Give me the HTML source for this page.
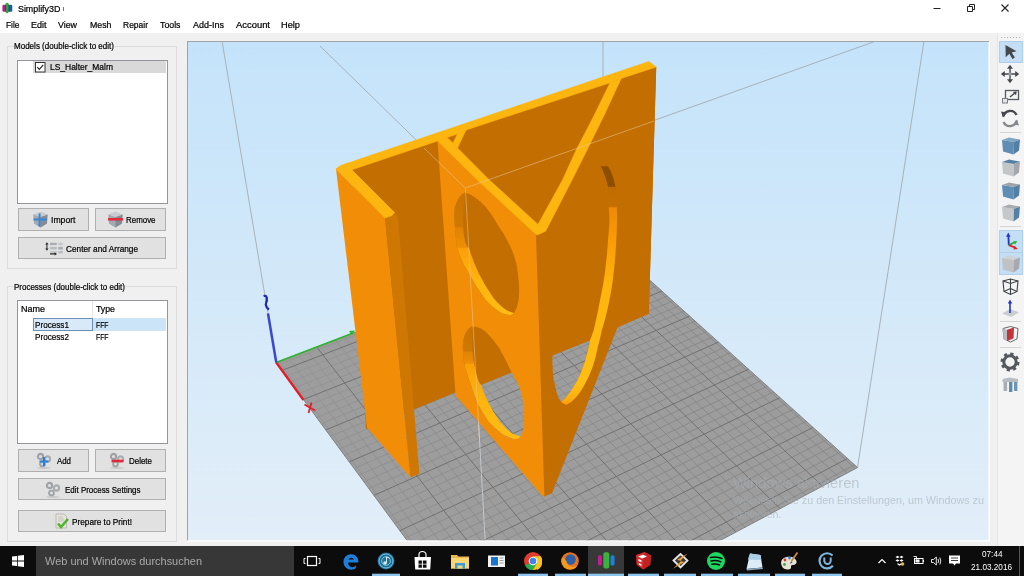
<!DOCTYPE html>
<html><head><meta charset="utf-8"><title>Simplify3D</title>
<style>
html,body{margin:0;padding:0}
body{width:1024px;height:576px;overflow:hidden;position:relative;background:#F0F0F0;font-family:"Liberation Sans", sans-serif;}
</style></head><body>
<div style="position:absolute;left:0;top:0;width:1024px;height:32.500px;background:#fff"></div>
<svg style="position:absolute;left:2px;top:2px" width="12" height="12" viewBox="2 2 12 12"><rect x="2.400" y="4.700" width="3.600" height="7" rx="1.300" fill="#B5238F"/><rect x="8.300" y="4.700" width="4" height="7" rx="1.300" fill="#1C5CB0"/><path d="M5.300 4l1.800 -1.500l1.800 1.500v8l-1.800 1.500l-1.800 -1.500z" fill="#2FA33A"/><rect x="4.900" y="5" width="0.800" height="6.400" fill="#5A1A55"/><rect x="8.600" y="5" width="0.800" height="6.400" fill="#14406E"/></svg>
<div style="position:absolute;left:62.800px;top:7.400px;width:1px;height:3.600px;background:#777"></div>
<svg style="position:absolute;left:920px;top:0.5px" width="104" height="17" viewBox="0 0 104 17"><path d="M13.5 7.5h7" stroke="#222" stroke-width="1"/><path d="M47.5 5.5h5v5h-5zM49.5 5.5v-2h5v5h-2" stroke="#222" stroke-width="1" fill="none"/><path d="M81.5 3.5l7 7m0 -7l-7 7" stroke="#222" stroke-width="1.1"/></svg>
<div style="position:absolute;left:7px;top:46px;width:168px;height:221px;border:1px solid #DCDCDC"></div>
<div style="position:absolute;left:7px;top:286px;width:168px;height:254px;border:1px solid #DCDCDC"></div>
<div style="position:absolute;left:17px;top:60px;width:149px;height:142px;background:#fff;border:1px solid #92969B"></div>
<div style="position:absolute;left:33px;top:61px;width:133px;height:12px;background:#D9D9D9"></div>
<svg style="position:absolute;left:35px;top:62px" width="11" height="11" viewBox="0 0 11 11"><rect x="0.5" y="0.5" width="9.5" height="9.5" fill="#fff" stroke="#333" stroke-width="1"/><path d="M2.3 5.2l2 2.2l4 -4.6" stroke="#222" stroke-width="1.1" fill="none"/></svg>
<div style="position:absolute;left:18px;top:208px;width:69px;height:21px;background:#E1E1E1;border:1px solid #B0B0B0"></div>
<div style="position:absolute;left:95px;top:208px;width:69px;height:21px;background:#E1E1E1;border:1px solid #B0B0B0"></div>
<div style="position:absolute;left:18px;top:237px;width:146px;height:20px;background:#E1E1E1;border:1px solid #B0B0B0"></div>
<div style="position:absolute;left:18px;top:449px;width:69px;height:21px;background:#E1E1E1;border:1px solid #B0B0B0"></div>
<div style="position:absolute;left:95px;top:449px;width:69px;height:21px;background:#E1E1E1;border:1px solid #B0B0B0"></div>
<div style="position:absolute;left:18px;top:478px;width:146px;height:20px;background:#E1E1E1;border:1px solid #B0B0B0"></div>
<div style="position:absolute;left:18px;top:510px;width:146px;height:20px;background:#E1E1E1;border:1px solid #B0B0B0"></div>
<div style="position:absolute;left:17px;top:300px;width:149px;height:142px;background:#fff;border:1px solid #92969B"></div>
<div style="position:absolute;left:92px;top:301px;width:1px;height:17px;background:#E5E5E5"></div>
<div style="position:absolute;left:33px;top:318px;width:133px;height:13px;background:#CCE4F7"></div>
<div style="position:absolute;left:33px;top:318px;width:58px;height:11px;background:#D8EAF9;border:1px solid #6F8FB5"></div>
<svg style="position:absolute;left:31.5px;top:211px" width="17" height="18" viewBox="0 0 17 18"><path d="M1.5 3.500l7 -2.500l7 2.500l-0.500 9l-6.500 4l-6.500 -4z" fill="#B4B8BD"/><path d="M1.500 3.500l7 2.500v10.500l-6.500 -4z" fill="#A4A9AF"/><path d="M8.500 6l7 -2.500l-0.500 9l-6.500 4z" fill="#858B92"/><path d="M1.500 3.500l7 -2.500l7 2.500l-7 2.500z" fill="#C9CCD0"/><path d="M7.600 2.500v13M1.500 8.500h13.500" stroke="#3787D2" stroke-width="2"/></svg>
<svg style="position:absolute;left:106.500px;top:211px" width="17" height="18" viewBox="0 0 17 18"><path d="M1.5 3.500l7 -2.500l7 2.500l-0.500 9l-6.500 4l-6.500 -4z" fill="#B4B8BD"/><path d="M1.500 3.500l7 2.500v10.500l-6.500 -4z" fill="#A4A9AF"/><path d="M8.500 6l7 -2.500l-0.500 9l-6.500 4z" fill="#858B92"/><path d="M1.500 3.500l7 -2.500l7 2.500l-7 2.500z" fill="#C9CCD0"/><path d="M1 8.300h15" stroke="#E0303E" stroke-width="2.600"/></svg>
<svg style="position:absolute;left:45px;top:241px" width="20" height="15" viewBox="45 241 20 15"><path d="M46.900 243.500v6" stroke="#333" stroke-width="1.100" fill="none"/><path d="M46.900 242.200l1.700 2.400h-3.400zM46.900 250.800l1.700 -2.400h-3.400z" fill="#333"/><rect x="50" y="242.800" width="6.800" height="2.300" fill="#A9ADB2"/><rect x="58.300" y="242.800" width="4.500" height="2.300" fill="#C2C5C9"/><rect x="50" y="246.900" width="6.800" height="2.600" fill="#B9BDC1"/><rect x="58.300" y="246.900" width="4.500" height="2.600" fill="#A9ADB2"/><rect x="50" y="251" width="6.800" height="1.800" fill="#C2C5C9"/><rect x="58.300" y="251" width="4.500" height="2.400" fill="#B9BDC1"/><path d="M50 253.900h5" stroke="#222" stroke-width="1.200"/><path d="M57 253.900l-2.400 -1.600v3.200z" fill="#222"/></svg>
<svg style="position:absolute;left:36px;top:452px" width="17" height="17" viewBox="0 0 17 17"><ellipse cx="8" cy="16" rx="7" ry="0.800" fill="#C2C2C2"/><circle cx="4.5" cy="4.5" r="2.600" fill="none" stroke="#9EA1A5" stroke-width="2.100"/><circle cx="11.5" cy="7" r="2.600" fill="none" stroke="#A8ABAF" stroke-width="2.100"/><circle cx="6.5" cy="12" r="2.400" fill="none" stroke="#A0A3A7" stroke-width="1.900"/><path d="M8 5v9M3.5 9.5h9" stroke="#2D7FD2" stroke-width="2.2"/></svg>
<svg style="position:absolute;left:109px;top:452px" width="17" height="17" viewBox="0 0 17 17"><ellipse cx="8" cy="16" rx="7" ry="0.800" fill="#C2C2C2"/><circle cx="4.5" cy="4.5" r="2.600" fill="none" stroke="#9EA1A5" stroke-width="2.100"/><circle cx="11.5" cy="7" r="2.600" fill="none" stroke="#A8ABAF" stroke-width="2.100"/><circle cx="6.5" cy="12" r="2.400" fill="none" stroke="#A0A3A7" stroke-width="1.900"/><path d="M2.5 9h12" stroke="#E02A3A" stroke-width="2.6"/></svg>
<svg style="position:absolute;left:45px;top:481px" width="17" height="17" viewBox="0 0 17 17"><ellipse cx="8" cy="16" rx="7" ry="0.800" fill="#C2C2C2"/><circle cx="4.5" cy="4.5" r="2.600" fill="none" stroke="#9EA1A5" stroke-width="2.100"/><circle cx="11.5" cy="7" r="2.600" fill="none" stroke="#A8ABAF" stroke-width="2.100"/><circle cx="6.5" cy="12" r="2.400" fill="none" stroke="#A0A3A7" stroke-width="1.900"/></svg>
<svg style="position:absolute;left:54px;top:513px" width="16" height="17" viewBox="0 0 16 17"><path d="M2 1h8l2.5 2.5v11.5h-10.5z" fill="#E4E4DC" stroke="#B0B0A8" stroke-width="0.8"/><path d="M4 4h5M4 6h6M4 8h6" stroke="#B8B8B0" stroke-width="0.7"/><path d="M4 10.5l3 3.5l7 -8" stroke="#4FB52B" stroke-width="2.6" fill="none"/></svg>
<svg width="1024" height="576" viewBox="0 0 1024 576" style="position:absolute;left:0;top:0">
<defs>
<linearGradient id="sky" x1="0" y1="0" x2="0" y2="1"><stop offset="0" stop-color="#C4E3FA"/><stop offset="1" stop-color="#E2EEF8"/></linearGradient>
<clipPath id="vp"><rect x="188" y="42" width="800.5" height="498.2"/></clipPath>
<linearGradient id="rimD" gradientUnits="userSpaceOnUse" x1="0" y1="166" x2="0" y2="405"><stop offset="0" stop-color="#8E4E00"/><stop offset="0.085" stop-color="#8E4E00"/><stop offset="0.09" stop-color="#BE6C00"/><stop offset="0.17" stop-color="#C57000"/><stop offset="0.175" stop-color="#F08A05"/><stop offset="0.30" stop-color="#F99A06"/><stop offset="0.5" stop-color="#FFB40C"/><stop offset="0.9" stop-color="#FFBE14"/><stop offset="0.97" stop-color="#FFB010"/><stop offset="1" stop-color="#FF9A08"/></linearGradient>
<linearGradient id="rimU" gradientUnits="userSpaceOnUse" x1="0" y1="192" x2="0" y2="315"><stop offset="0" stop-color="#C97300"/><stop offset="0.28" stop-color="#CE7902"/><stop offset="0.29" stop-color="#E08304"/><stop offset="0.45" stop-color="#EE8E06"/><stop offset="0.46" stop-color="#FBA008"/><stop offset="0.75" stop-color="#FFB60E"/><stop offset="1" stop-color="#FFBC12"/></linearGradient>
<linearGradient id="rimL" gradientUnits="userSpaceOnUse" x1="0" y1="326" x2="0" y2="439"><stop offset="0" stop-color="#C97300"/><stop offset="0.22" stop-color="#CE7902"/><stop offset="0.23" stop-color="#E08304"/><stop offset="0.33" stop-color="#EE8E06"/><stop offset="0.34" stop-color="#FBA008"/><stop offset="0.7" stop-color="#FFB60E"/><stop offset="1" stop-color="#FFBC12"/></linearGradient>
<linearGradient id="mg" gradientUnits="userSpaceOnUse" x1="276" y1="363" x2="640" y2="520"><stop offset="0" stop-color="#939393"/><stop offset="0.5" stop-color="#888888"/><stop offset="1" stop-color="#828282"/></linearGradient>
</defs>
<rect x="187" y="41" width="803" height="500.5" fill="#FFFFFF"/>
<rect x="187" y="41" width="802" height="1" fill="#A3A3A3"/><rect x="187" y="41" width="1" height="499.5" fill="#A3A3A3"/>
<rect x="188" y="42" width="800.5" height="498.2" fill="url(#sky)"/>
<g clip-path="url(#vp)">
<polygon points="276.2,362.5 603.0,238.0 857.5,467.5 495.0,660.0" fill="#9D9D9D"/>
<path d="M277.9 364.8L605.0 239.8M286.3 376.1L615.0 248.8M278.9 361.5L498.0 658.4M290.5 381.9L620.0 253.4M288.5 357.8L508.9 652.6M294.8 387.7L625.1 257.9M298.0 354.2L519.7 646.9M299.1 393.6L630.2 262.6M307.4 350.6L530.4 641.2M307.8 405.5L640.6 271.9M326.1 343.5L551.6 630.0M312.3 411.5L645.9 276.7M335.3 340.0L562.0 624.4M316.7 417.6L651.2 281.5M344.5 336.5L572.4 618.9M321.3 423.7L656.5 286.3M353.6 333.0L582.6 613.5M330.4 436.2L667.4 296.0M371.6 326.2L602.9 602.7M335.1 442.5L672.9 301.0M380.6 322.8L612.9 597.4M339.8 448.9L678.4 306.0M389.4 319.4L622.9 592.1M344.5 455.3L684.0 311.0M398.2 316.0L632.7 586.9M354.1 468.4L695.2 321.2M415.7 309.4L652.2 576.5M359.0 475.1L701.0 326.3M424.3 306.1L661.8 571.4M363.9 481.8L706.7 331.5M432.9 302.8L671.3 566.4M368.9 488.5L712.6 336.8M441.4 299.6L680.8 561.3M379.0 502.3L724.3 347.4M458.3 293.1L699.5 551.4M384.1 509.2L730.3 352.8M466.7 289.9L708.7 546.5M389.3 516.3L736.3 358.2M475.0 286.8L717.9 541.6M394.6 523.4L742.4 363.7M483.2 283.6L727.0 536.8M405.2 537.9L754.7 374.8M499.6 277.4L745.0 527.3M410.6 545.2L761.0 380.5M507.7 274.3L753.8 522.5M416.0 552.6L767.3 386.1M515.7 271.3L762.7 517.9M421.5 560.1L773.6 391.9M523.7 268.2L771.4 513.2M432.7 575.3L786.5 403.5M539.6 262.2L788.7 504.0M438.4 583.1L793.0 409.4M547.4 259.2L797.2 499.5M444.2 590.9L799.6 415.3M555.2 256.2L805.7 495.0M450.0 598.8L806.3 421.3M562.9 253.3L814.1 490.5M461.8 614.8L819.8 433.5M578.3 247.4L830.8 481.7M467.8 623.0L826.6 439.6M585.9 244.5L839.0 477.3M473.8 631.2L833.5 445.9M593.4 241.6L847.2 473.0M480.0 639.6L840.5 452.1M600.9 238.8L855.3 468.7M492.4 656.5L854.6 464.9" stroke="url(#mg)" stroke-width="0.75" fill="none"/>
<path d="M282.1 370.4L610.0 244.3M303.4 399.5L635.4 267.2M316.8 347.1L541.0 635.5M325.8 429.9L661.9 291.1M362.6 329.6L592.8 608.1M349.3 461.8L689.6 316.1M407.0 312.7L642.5 581.7M373.9 495.4L718.4 342.1M449.9 296.3L690.2 556.4M399.8 530.6L748.5 369.2M491.4 280.5L736.0 532.0M427.1 567.7L780.0 397.6M531.7 265.2L780.1 508.6M455.8 606.8L813.0 427.4M570.6 250.3L822.5 486.1M486.2 648.0L847.5 458.5" stroke="#717171" stroke-width="1" fill="none"/>
<polygon points="276.2,362.5 603.0,238.0 857.5,467.5 495.0,660.0" fill="none" stroke="#808080" stroke-width="1"/>
<g stroke="#A4ABB2" stroke-width="0.9" fill="none">
<path d="M222 41L276.25 362.5"/>
<path d="M603 41L603 238"/>
<path d="M924 41L857.5 467.5"/>
<path d="M320 46L465.4 188L876 41"/>
<path d="M465.4 188L485.2 541" stroke="#CDD1D5" stroke-width="0.8"/>
</g>
<path d="M276.25 362.5L352 333.5" stroke="#2DB52D" stroke-width="1.6"/>
<path d="M349 331l6 -0.5l-3 4.5z" fill="#2DB52D"/>
<path d="M276.25 362.5L303.5 400" stroke="#E0202A" stroke-width="2.4"/>
<path d="M304.5 404.5L315 410.5M311.5 402.5L308.5 413" stroke="#E0202A" stroke-width="1.8"/>
<path d="M276.25 362.5L268 313.5" stroke="#3A48D0" stroke-width="2.5"/>
<path d="M263.6 296q2.600 -0.800 3.200 1.800q0.400 2.600 -0.600 4.600q-1 2.400 0.400 4.600q0.800 1.600 2.400 2.400" stroke="#1F28B8" stroke-width="2.200" fill="none"/>
<polygon points="351.8,166.5 650.0,64.8 656.2,67.3 648.8,313.8 366.0,429.0" fill="#C36E00"/>
<path fill-rule="evenodd" d="M534.5 233L545.6 231.25L621.25 78.4L656.25 67L648.75 313.75L617.5 327.5L552 493.25L544.4 496.4L542 495Z M552.5 355.6L590 340.6L585 361.25Q582 371 577.5 380T568.75 393.75Q565 399 561.25 402Q558 398 557 393.75T553.75 380Q552 368 552.5 355.6Z" fill="#C36E00"/>
<path d="M600.6 166.25L608 166.25Q613.5 175 615.6 187.5Q617.5 205 617 222Q616.8 232 616.25 240.75Q615.5 257 613.75 272Q612.5 284 610.6 294Q607 314 601.9 330Q600 339 598 346.25Q596 357 592.5 367.5Q589 377 583.75 386.25Q579 395 571.25 402L566 405L561.25 402Q565 399 568.75 393.75Q574 387 577.5 380Q582 371 585 361.25Q588 351 590 340.6Q592 335 593.75 330Q598 312 601.25 294Q603.5 284 605 272Q607 256 608 240.75Q609 230 609.4 222Q609.5 214 608.75 207.5Q608.5 196 608 186.25Q605 174 600.6 166.25Z" fill="url(#rimD)"/>
<polygon points="336.0,168.8 340.5,165.6 648.8,61.5 656.2,67.0 621.2,78.4 610.0,82.8 466.0,130.0 457.5,134.0 447.0,137.5 437.5,141.0 351.8,169.8" fill="#FDB50F" stroke="#FDB50F" stroke-width="0.6" stroke-linejoin="round"/>
<polygon points="336.0,168.8 385.0,218.0 410.5,477.5 367.0,427.5" fill="#F28D08"/>
<polygon points="385.0,218.0 394.5,212.5 398.0,218.0 419.4,473.8 410.5,477.5" fill="#CE7803"/>
<polygon points="336.0,168.8 351.8,169.8 394.5,212.5 392.0,215.5 385.0,218.0" fill="#FDB50F" stroke="#FDB50F" stroke-width="0.6" stroke-linejoin="round"/>
<path fill-rule="evenodd" d="M464.75 192.25Q458 196 454.75 207.25Q453.5 216 454.75 226Q455.5 237 457 248Q461 261 468.5 273Q476 287 486 300.5Q493 308 501 313Q506 315.5 511 315Q513.5 314 514.75 311.75Q517.5 307 518.5 300.5Q519.5 293 519 285.5Q518.5 276 517 266.75Q515 257 511 248Q506 236 498.5 226Q493 216 486 207.25Q476 196 464.75 192.25ZM466 192.5Q463.5 200 463 212Q462.5 226 464 236T469 248Q473 261 478.5 273Q485 286 493.5 298Q500 306 507 310.5L513.5 313L514.75 311.75Q517.5 307 518.5 300.5Q519.5 293 519 285.5Q518.5 276 517 266.75Q515 257 511 248Q506 236 498.5 226Q493 216 486 207.25Q476 196 466 192.5Z" fill="url(#rimU)"/>
<path fill-rule="evenodd" d="M471 326.6Q465 331 463 341Q462.5 350 463.5 359.75Q465 369 468.5 378.5Q470 383 472 388Q474 395 477.25 402.75Q482 412 488.5 421.5Q495 429 502.25 434Q508 437.5 513.5 439Q516.5 439.3 518.5 438.4Q520 437.5 521 436Q523 432 523.5 427.75Q524.3 421 524 415.25Q523.5 405 522.25 396.5Q520.5 390 518 384Q516 380 514.75 378.5Q512 372 508.5 366Q504 356 498.5 347Q493 339 486 332Q479 326 471 326.6ZM472 328.5Q471.5 340 473.5 360Q475 369 477 376T481 384.75Q484 394 488.5 402.75Q493 412 499.75 421.5Q505 428 511 432.75Q515 435 519.75 436L521 436Q523 432 523.5 427.75Q524.3 421 524 415.25Q523.5 405 522.25 396.5Q520.5 390 518 384Q516 380 514.75 378.5Q512 372 508.5 366Q504 356 498.5 347Q493 339 486 332Q479 326 472 328.5Z" fill="url(#rimL)"/>
<clipPath id="cl"><path d="M472 328.5Q471.5 340 473.5 360Q475 369 477 376T481 384.75Q484 394 488.5 402.75Q493 412 499.75 421.5Q505 428 511 432.75Q515 435 519.75 436L521 436Q523 432 523.5 427.75Q524.3 421 524 415.25Q523.5 405 522.25 396.5Q520.5 390 518 384Q516 380 514.75 378.5Q512 372 508.5 366Q504 356 498.5 347Q493 339 486 332Q479 326 472 328.5Z"/></clipPath>
<polygon clip-path="url(#cl)" points="460.0,320.0 530.0,320.0 530.0,365.3 460.0,393.3" fill="#C36E00"/>
<path fill-rule="evenodd" d="M437.5 141L536 234.4L544.4 496.4L541.25 494.5L455.6 395.6ZM464.75 192.25Q458 196 454.75 207.25Q453.5 216 454.75 226Q455.5 237 457 248Q461 261 468.5 273Q476 287 486 300.5Q493 308 501 313Q506 315.5 511 315Q513.5 314 514.75 311.75Q517.5 307 518.5 300.5Q519.5 293 519 285.5Q518.5 276 517 266.75Q515 257 511 248Q506 236 498.5 226Q493 216 486 207.25Q476 196 464.75 192.25ZM471 326.6Q465 331 463 341Q462.5 350 463.5 359.75Q465 369 468.5 378.5Q470 383 472 388Q474 395 477.25 402.75Q482 412 488.5 421.5Q495 429 502.25 434Q508 437.5 513.5 439Q516.5 439.3 518.5 438.4Q520 437.5 521 436Q523 432 523.5 427.75Q524.3 421 524 415.25Q523.5 405 522.25 396.5Q520.5 390 518 384Q516 380 514.75 378.5Q512 372 508.5 366Q504 356 498.5 347Q493 339 486 332Q479 326 471 326.6Z" fill="#F28D08"/>
<polygon points="437.5,141.0 447.0,137.5 453.0,143.0 457.5,148.0 489.4,180.0 538.0,224.4 562.5,180.0 576.2,150.0 593.8,116.0 610.0,82.8 621.2,78.4 603.8,116.0 587.0,150.0 572.0,180.0 545.6,231.2 537.0,235.0 536.0,234.4 480.0,182.5" fill="#FDB50F" stroke="#FDB50F" stroke-width="0.6" stroke-linejoin="round"/>
<polygon points="453.0,143.0 457.5,134.0 466.0,130.0 457.5,148.0" fill="#FDB50F" stroke="#FDB50F" stroke-width="0.6" stroke-linejoin="round"/>
<g stroke="#E8CB98" stroke-width="0.9" fill="none" opacity="0.6">
<path d="M424 148L465.4 188L654 121"/>
<path d="M465.4 188L479.5 440"/>
</g>
</g>
</svg>
<div style="position:absolute;left:997px;top:33px;width:27px;height:513px;background:#F4F4F4;border-left:1px solid #E6E6E6"></div>
<svg style="position:absolute;left:996px;top:33px" width="28" height="513" viewBox="996 33 28 513">
<path d="M1001 37.5h21" stroke="#B5B5B5" stroke-width="1" stroke-dasharray="1.2 1.8"/>
<rect x="999.5" y="41.5" width="23" height="21" fill="#C3DEF5" stroke="#AFCFEC" stroke-width="1"/>
<rect x="999.5" y="230.500" width="23" height="22" fill="#C3DEF5" stroke="#AFCFEC" stroke-width="1"/>
<rect x="999.5" y="252.5" width="23" height="22" fill="#C3DEF5" stroke="#AFCFEC" stroke-width="1"/>
<path d="M1000 132.5h21" stroke="#D5D5D5" stroke-width="1"/>
<path d="M1000 226.5h21" stroke="#D5D5D5" stroke-width="1"/>
<path d="M1000 321.5h21" stroke="#D5D5D5" stroke-width="1"/>
<path d="M1000 347.5h21" stroke="#D5D5D5" stroke-width="1"/>
<path d="M1005.5 45l11 6.2l-4.8 1.2l3.2 5.2l-2.4 1.4l-3.2 -5.3l-3.6 3.6z" fill="#45484D"/>
<g fill="#45484D" stroke="#45484D" stroke-width="1.4"><path d="M1010 68v12M1004 74h12" fill="none"/><path d="M1010 64.800l3 4h-6zM1010 83.200l3 -4h-6zM1000.800 74l4 -3v6zM1019.200 74l-4 -3v6z" stroke="none"/></g><rect x="1008.6" y="72.600" width="2.800" height="2.800" fill="#9A9DA2"/>
<rect x="1005.5" y="90.5" width="13" height="9" fill="#F4F4F4" stroke="#55585D" stroke-width="1.3"/><rect x="1002.5" y="98.500" width="5" height="4.500" fill="#E6E6E6" stroke="#7A7D82" stroke-width="1"/><path d="M1010 97l5.500 -4.500" stroke="#45484D" stroke-width="1.5"/><path d="M1016.800 91.300l-4 0.700l3.200 3.200z" fill="#45484D"/>
<g fill="none" stroke-width="2.300"><path d="M1003.300 116.500a7 7 0 0 1 13.200 -1.500" stroke="#45484D"/><path d="M1016.700 120.500a7 7 0 0 1 -13.200 1.500" stroke="#85888D"/></g><path d="M1001 111.500l6 1l-4 5z" fill="#45484D"/><path d="M1019 125.500l-6 -1l4 -5z" fill="#85888D"/>
<path d="M1002 140L1014 142L1013.5 154.5L1003 151.5z" fill="#5F8DB3"/><path d="M1002 140L1009 137.5L1020 139.5L1014 142z" fill="#7FA6C4"/><path d="M1014 142L1020 139.5L1019 150.5L1013.5 154.5z" fill="#527FA5"/>
<path d="M1002 162L1014 164L1013.5 176.5L1003 173.5z" fill="#C3C6C9"/><path d="M1002 162L1009 159.5L1020 161.5L1014 164z" fill="#5580A5"/><path d="M1014 164L1020 161.5L1019 172.5L1013.5 176.5z" fill="#A3A6AA"/>
<path d="M1002 185L1014 187L1013.5 199.5L1003 196.5z" fill="#5F8DB3"/><path d="M1002 185L1009 182.5L1020 184.5L1014 187z" fill="#A0A4A9"/><path d="M1014 187L1020 184.5L1019 195.5L1013.5 199.5z" fill="#527FA5"/>
<path d="M1002 207L1014 209L1013.5 221.5L1003 218.5z" fill="#C5C7CA"/><path d="M1002 207L1009 204.5L1020 206.5L1014 209z" fill="#A8ACB0"/><path d="M1014 209L1020 206.5L1019 217.5L1013.5 221.5z" fill="#5580A5"/>
<path d="M1008.800 245.100L1008.400 236" stroke="#2335C8" stroke-width="1.800"/><path d="M1008.300 232.500l2.200 4.200h-4.400z" fill="#2335C8"/><path d="M1008.800 245.100l6 -2.800" stroke="#27B03A" stroke-width="1.800"/><path d="M1017.300 241l-4 0.200l1.800 3.200z" fill="#27B03A"/><path d="M1008.800 245.100l6.500 2.600" stroke="#D8262E" stroke-width="1.800"/><path d="M1018 248.900l-3.400 -2.800l-1.200 3.400z" fill="#D8262E"/>
<path d="M1002 258L1014 260L1013.5 272.5L1003 269.5z" fill="#BFC1C4"/><path d="M1002 258L1009 255.5L1020 257.5L1014 260z" fill="#CFD1D4"/><path d="M1014 260L1020 257.5L1019 268.5L1013.5 272.5z" fill="#A6A9AD"/>
<g fill="none" stroke="#3C3F44" stroke-width="1.100"><path d="M1003 281l7.500 -2l7.500 2l-1 10.500l-6.500 3l-6.500 -3z"/><path d="M1003 281l7.500 2.500l7.500 -2.500M1010.500 283.500v11M1010.500 279v9.500l-6.500 3M1010.500 288.500l6.500 3"/></g>
<path d="M1002 313.500l8 -4.500l9 3.500l-8 4.500z" fill="#C9CCD0"/><path d="M1010 313v-11" stroke="#2335C8" stroke-width="1.600"/><path d="M1010 299.500l2.200 4h-4.400z" fill="#2335C8"/>
<g fill="none" stroke="#55585D" stroke-width="0.9"><path d="M1003 328.500l7.500 -2l7.500 2l-1 10.500l-6.500 3l-6.500 -3z"/></g><path d="M1003 328.500l4 1.300v11.200l-3.600 -1.800z" fill="#B8BBBF"/><path d="M1007 329.800l7 -2.300l-0.500 11l-6.500 2.500z" fill="#C3343A"/>
<circle cx="1010" cy="362" r="6.200" fill="none" stroke="#55585D" stroke-width="3"/><circle cx="1010" cy="362" r="8.300" fill="none" stroke="#55585D" stroke-width="2.400" stroke-dasharray="3.260 3.260"/>
<path d="M1002.500 379l7 -1.500l8.500 1.500v3h-15.500z" fill="#B9BDC2"/><rect x="1003.500" y="382" width="3.600" height="9" fill="#A9ADB2"/><rect x="1009" y="382" width="3.400" height="10" fill="#5C8DB0"/><rect x="1014" y="382" width="3.400" height="9" fill="#6E95B3"/>
</svg>
<div style="position:absolute;left:0;top:545.5px;width:1024px;height:30.5px;background:#0C0C0C"></div>
<div style="position:absolute;left:36px;top:545.5px;width:258px;height:30.5px;background:#373737"></div>
<div style="position:absolute;left:588px;top:545.5px;width:36px;height:30.5px;background:#383838"></div>
<svg style="position:absolute;left:0;top:546px" width="1024" height="30" viewBox="0 546 1024 30">
<path d="M12 556.600l5 -0.700v4.700h-5zM17.800 555.800l6.200 -0.900v5.700h-6.200zM12 561.400h5v4.700l-5 -0.700zM17.800 561.400h6.200v5.700l-6.200 -0.900z" fill="#fff"/>
<rect x="372" y="573.700" width="28" height="2.300" fill="#8CC6EE"/>
<rect x="518" y="573.700" width="30" height="2.300" fill="#8CC6EE"/>
<rect x="555" y="573.700" width="31" height="2.300" fill="#8CC6EE"/>
<rect x="588" y="573.700" width="36" height="2.300" fill="#8CC6EE"/>
<rect x="628" y="573.700" width="31" height="2.300" fill="#8CC6EE"/>
<rect x="664" y="573.700" width="32" height="2.300" fill="#8CC6EE"/>
<rect x="701" y="573.700" width="32" height="2.300" fill="#8CC6EE"/>
<rect x="738" y="573.700" width="32" height="2.300" fill="#8CC6EE"/>
<rect x="775" y="573.700" width="30" height="2.300" fill="#8CC6EE"/>
<rect x="812" y="573.700" width="30" height="2.300" fill="#8CC6EE"/>
<rect x="307.500" y="556.500" width="9" height="9" fill="none" stroke="#fff" stroke-width="1.200"/><path d="M305.500 558.500h-1.500v5h1.500M318.500 558.500h1.500v5h-1.500" stroke="#fff" stroke-width="1" fill="none"/>
<path d="M343.500 561.500a7.500 7.500 0 0 1 14.800 -1.500v2.500h-10a4 4 0 0 0 7.500 2.500v3.200a7.800 7.800 0 0 1 -12.300 -5.500z M348.500 559.500h5.500a3 3 0 0 0 -5.500 0z" fill="#1E7FDB" fill-rule="evenodd"/>
<circle cx="386" cy="561" r="8.500" fill="#1F6E94"/><circle cx="386" cy="561" r="7" fill="none" stroke="#7CC4E4" stroke-width="1"/><circle cx="386" cy="561" r="4.300" fill="none" stroke="#7CC4E4" stroke-width="1"/><circle cx="385" cy="563" r="1.800" fill="#CFEAF6"/><path d="M386.500 563v-6l3 1" stroke="#CFEAF6" stroke-width="1" fill="none"/>
<path d="M414.500 557h16.500l-0.800 12.500h-15z" fill="#fff"/><path d="M419 557v-2.500a3.500 3 0 0 1 7 0v2.500" stroke="#fff" stroke-width="1.200" fill="none"/><path d="M418.500 560.500h3.400v3.200h-3.400zM422.900 560.500h3.600v3.200h-3.600zM418.500 564.500h3.400v3.200h-3.400zM422.900 564.500h3.600v3.200h-3.600z" fill="#0C0C0C"/>
<path d="M451 555h6l1.500 1.500h10.500v12h-18z" fill="#E8B84A"/><path d="M451 558h18v10.500h-18z" fill="#F7D673"/><path d="M455 563h10v5.500h-10z" fill="#3C9BD8"/><path d="M457.500 565.500h5v3h-5z" fill="#F7D673"/>
<rect x="488" y="555.500" width="17" height="11.500" fill="#F2F2F2"/><rect x="491" y="557" width="7" height="8.500" fill="#1874CD"/><path d="M499.500 558h4M499.500 560.500h4M499.500 563h4" stroke="#8A8A8A" stroke-width="0.800"/>
<circle cx="533" cy="561" r="9" fill="#E33B2E"/><path d="M533 561L525.200 565.500A9 9 0 0 0 533 570L537.500 562.500z" fill="#2DA94F"/><path d="M533 561L537.500 570A9 9 0 0 0 542 561A9 9 0 0 0 540.800 556.500H533z" fill="#FCC31E" transform="rotate(0 533 561)"/><path d="M533 570A9 9 0 0 0 540.800 556.500L533 556.500z" fill="#FCC31E"/><path d="M525.200 565.500A9 9 0 0 0 533 570L537 563z" fill="#2DA94F"/><circle cx="533" cy="561" r="4.300" fill="#fff"/><circle cx="533" cy="561" r="3.300" fill="#3F82E8"/>
<circle cx="570" cy="561" r="8.800" fill="#E8731A"/><circle cx="570.500" cy="559.500" r="5.200" fill="#2E5FA8"/><path d="M561.500 559a8.800 8.800 0 0 0 16 6.500q-3 2 -6.500 1q-4 -1.500 -4.500 -5.500q-2 -1 -2.500 -3.500q-1.500 0.500 -2.500 1.500z" fill="#F29A1F"/>
<rect x="598" y="555.300" width="3.900" height="10.200" rx="1.600" fill="#C21D92"/><rect x="603.300" y="552.300" width="6" height="16.200" rx="2" fill="#3DB13F"/><rect x="610.500" y="555.300" width="4.100" height="10.200" rx="1.600" fill="#1F7FD8"/>
<path d="M636 555l8.500 -3l6.500 3.500l-0.800 9.500l-7.200 4.500l-6.500 -5z" fill="#D92B2B"/><path d="M644.500 552l6.500 3.500l-0.800 9.500l-7.200 4.500l0.500 -10z" fill="#C02222"/><path d="M638 556.500l5 -1.700l4 1.800l-4.800 2z" fill="#fff"/><path d="M638.500 559l3 1.300v2l-3 -1.200zM638.800 563l2.700 1.200v1.800l-2.700 -1.300z" fill="#fff"/>
<path d="M673.500 560.500l7 -6.500l7 6.500l-7 7z" fill="#3A3A3A" stroke="#E6E6E6" stroke-width="1.800"/><path d="M687.500 553.500l-10.500 6.500l4.500 0.800l-8.500 8l11.500 -6.800l-4.500 -1z" fill="#F0A22E"/>
<circle cx="716" cy="561" r="9" fill="#1ED760"/><path d="M710.500 557.500q6 -1.600 11.500 1M711 561q5 -1.300 9.800 0.900M711.800 564.300q4 -1 7.800 0.700" stroke="#0C0C0C" stroke-width="1.500" fill="none" stroke-linecap="round"/>
<path d="M750 553.500l10.500 1.500l2 12.500l-16 1.500z" fill="#DCEBF5"/><path d="M750 553.500l10.500 1.500l0.800 5l-13.500 -0.500z" fill="#A9CFE8"/><path d="M746.500 569l16 -1.500l0.500 1.500l-16 1.500z" fill="#8AA9BF"/>
<path d="M781 563a8 6.500 0 0 1 15.500 -2q0.500 4 -4 4q-2 0 -1.500 2t-3 2.500q-6 0.500 -7 -6.500z" fill="#E9E2D5"/><circle cx="785" cy="560" r="1.400" fill="#D93A2E"/><circle cx="789.500" cy="558" r="1.400" fill="#2F7FD8"/><circle cx="784.500" cy="564.500" r="1.400" fill="#34A853"/><path d="M797.500 552.500l-6 8.500" stroke="#C98A3A" stroke-width="1.800"/><path d="M791.500 561l-1.800 3l2.800 -1.500z" fill="#555"/>
<path d="M832.600 555.600a7.600 7.600 0 1 0 0.300 10.200" stroke="#7CB5D9" stroke-width="2.200" fill="none"/><path d="M824.300 557.500v3.200a3.200 3.200 0 0 0 6.400 0v-3.200" stroke="#7CB5D9" stroke-width="2" fill="none"/>
<path d="M878.500 563l3.500 -3.500l3.500 3.500" stroke="#fff" stroke-width="1.200" fill="none"/>
<path d="M895.500 557l2 -1.300l2 1.300l-2 1.300zM899.500 557l2 -1.300l2 1.300l-2 1.300zM895.500 560.500l2 -1.300l2 1.300l-2 1.300zM899.500 560.500l2 -1.300l2 1.300l-2 1.300zM897.500 563l2 1.200l2 -1.200v1.500l-2 1.300l-2 -1.300z" fill="#fff"/><circle cx="902.500" cy="564" r="1.800" fill="#E2B93B"/>
<rect x="914.500" y="558.500" width="8.500" height="5" fill="none" stroke="#fff" stroke-width="1"/><path d="M923.500 560v2" stroke="#fff" stroke-width="1"/><rect x="915.500" y="559.500" width="4" height="3" fill="#fff"/><path d="M913.500 556.500h3v3" stroke="#fff" stroke-width="0.900" fill="none"/>
<path d="M931.500 559.500h2l2.800 -2.500v8l-2.800 -2.500h-2z" fill="none" stroke="#fff" stroke-width="0.900"/><path d="M938 559q1.200 2 0 4M939.800 557.500q2 3.500 0 7" stroke="#fff" stroke-width="0.900" fill="none"/>
<path d="M949 555.500h11v8h-4l-1.500 2l-1.500 -2h-4z" fill="#fff"/><path d="M951 558h7M951 560.500h7" stroke="#0C0C0C" stroke-width="0.800"/>
<path d="M1019.500 546v30" stroke="#555" stroke-width="1"/>
</svg>
<div style="position:absolute;left:0;top:0;width:1024px;height:576px;will-change:transform">
<span id="t0" style="position:absolute;left:17.5px;top:4.15px;font-size:9.25px;line-height:11.10px;color:#000;transform-origin:0 0;transform:scaleX(0.9566);white-space:nowrap;-webkit-text-stroke:0.22px #000;">Simplify3D</span>
<span id="t1" style="position:absolute;left:6px;top:19.88px;font-size:9px;line-height:10.80px;color:#000;transform-origin:0 0;transform:scaleX(0.9300);white-space:nowrap;-webkit-text-stroke:0.22px #000;">File</span>
<span id="t2" style="position:absolute;left:31px;top:19.88px;font-size:9px;line-height:10.80px;color:#000;transform-origin:0 0;transform:scaleX(0.9990);white-space:nowrap;-webkit-text-stroke:0.22px #000;">Edit</span>
<span id="t3" style="position:absolute;left:58px;top:19.88px;font-size:9px;line-height:10.80px;color:#000;transform-origin:0 0;transform:scaleX(0.9814);white-space:nowrap;-webkit-text-stroke:0.22px #000;">View</span>
<span id="t4" style="position:absolute;left:89.5px;top:19.88px;font-size:9px;line-height:10.80px;color:#000;transform-origin:0 0;transform:scaleX(0.9766);white-space:nowrap;-webkit-text-stroke:0.22px #000;">Mesh</span>
<span id="t5" style="position:absolute;left:123px;top:19.88px;font-size:9px;line-height:10.80px;color:#000;transform-origin:0 0;transform:scaleX(0.9428);white-space:nowrap;-webkit-text-stroke:0.22px #000;">Repair</span>
<span id="t6" style="position:absolute;left:160px;top:19.88px;font-size:9px;line-height:10.80px;color:#000;transform-origin:0 0;transform:scaleX(0.9755);white-space:nowrap;-webkit-text-stroke:0.22px #000;">Tools</span>
<span id="t7" style="position:absolute;left:193px;top:19.88px;font-size:9px;line-height:10.80px;color:#000;transform-origin:0 0;transform:scaleX(0.9990);white-space:nowrap;-webkit-text-stroke:0.22px #000;">Add-Ins</span>
<span id="t8" style="position:absolute;left:236px;top:19.88px;font-size:9px;line-height:10.80px;color:#000;transform-origin:0 0;transform:scaleX(1.0451);white-space:nowrap;-webkit-text-stroke:0.22px #000;">Account</span>
<span id="t9" style="position:absolute;left:281px;top:19.88px;font-size:9px;line-height:10.80px;color:#000;transform-origin:0 0;transform:scaleX(1.0262);white-space:nowrap;-webkit-text-stroke:0.22px #000;">Help</span>
<span id="t10" style="position:absolute;left:14px;top:40.88px;font-size:9px;line-height:10.80px;color:#000;transform-origin:0 0;transform:scaleX(0.8924);white-space:nowrap;background:#F0F0F0;-webkit-text-stroke:0.22px #000;">Models (double-click to edit)</span>
<span id="t11" style="position:absolute;left:50px;top:61.88px;font-size:9px;line-height:10.80px;color:#000;transform-origin:0 0;transform:scaleX(0.9399);white-space:nowrap;-webkit-text-stroke:0.22px #000;">LS_Halter_Malm</span>
<span id="t12" style="position:absolute;left:51px;top:214.88px;font-size:9px;line-height:10.80px;color:#000;transform-origin:0 0;transform:scaleX(0.9602);white-space:nowrap;-webkit-text-stroke:0.22px #000;">Import</span>
<span id="t13" style="position:absolute;left:126px;top:214.88px;font-size:9px;line-height:10.80px;color:#000;transform-origin:0 0;transform:scaleX(0.8802);white-space:nowrap;-webkit-text-stroke:0.22px #000;">Remove</span>
<span id="t14" style="position:absolute;left:66px;top:243.63px;font-size:9px;line-height:10.80px;color:#000;transform-origin:0 0;transform:scaleX(0.9165);white-space:nowrap;-webkit-text-stroke:0.22px #000;">Center and Arrange</span>
<span id="t15" style="position:absolute;left:14px;top:282.13px;font-size:9px;line-height:10.80px;color:#000;transform-origin:0 0;transform:scaleX(0.8876);white-space:nowrap;background:#F0F0F0;-webkit-text-stroke:0.22px #000;">Processes (double-click to edit)</span>
<span id="t16" style="position:absolute;left:21px;top:304.13px;font-size:9px;line-height:10.80px;color:#000;transform-origin:0 0;transform:scaleX(0.9993);white-space:nowrap;-webkit-text-stroke:0.22px #000;">Name</span>
<span id="t17" style="position:absolute;left:96px;top:304.13px;font-size:9px;line-height:10.80px;color:#000;transform-origin:0 0;transform:scaleX(0.9736);white-space:nowrap;-webkit-text-stroke:0.22px #000;">Type</span>
<span id="t18" style="position:absolute;left:35px;top:319.63px;font-size:9px;line-height:10.80px;color:#000;transform-origin:0 0;transform:scaleX(0.9059);white-space:nowrap;-webkit-text-stroke:0.22px #000;">Process1</span>
<span id="t19" style="position:absolute;left:95.5px;top:319.63px;font-size:9px;line-height:10.80px;color:#000;transform-origin:0 0;transform:scaleX(0.7576);white-space:nowrap;-webkit-text-stroke:0.22px #000;">FFF</span>
<span id="t20" style="position:absolute;left:35px;top:332.13px;font-size:9px;line-height:10.80px;color:#000;transform-origin:0 0;transform:scaleX(0.9059);white-space:nowrap;-webkit-text-stroke:0.22px #000;">Process2</span>
<span id="t21" style="position:absolute;left:95.5px;top:332.13px;font-size:9px;line-height:10.80px;color:#000;transform-origin:0 0;transform:scaleX(0.7576);white-space:nowrap;-webkit-text-stroke:0.22px #000;">FFF</span>
<span id="t22" style="position:absolute;left:57px;top:456.13px;font-size:9px;line-height:10.80px;color:#000;transform-origin:0 0;transform:scaleX(0.8741);white-space:nowrap;-webkit-text-stroke:0.22px #000;">Add</span>
<span id="t23" style="position:absolute;left:129px;top:456.13px;font-size:9px;line-height:10.80px;color:#000;transform-origin:0 0;transform:scaleX(0.8841);white-space:nowrap;-webkit-text-stroke:0.22px #000;">Delete</span>
<span id="t24" style="position:absolute;left:64.5px;top:484.88px;font-size:9px;line-height:10.80px;color:#000;transform-origin:0 0;transform:scaleX(0.8826);white-space:nowrap;-webkit-text-stroke:0.22px #000;">Edit Process Settings</span>
<span id="t25" style="position:absolute;left:72px;top:516.63px;font-size:9px;line-height:10.80px;color:#000;transform-origin:0 0;transform:scaleX(0.9156);white-space:nowrap;-webkit-text-stroke:0.22px #000;">Prepare to Print!</span>
<span id="t26" style="position:absolute;left:45px;top:554.55px;font-size:11.5px;line-height:13.80px;color:#A9A9A9;transform-origin:0 0;transform:scaleX(0.9531);white-space:nowrap;">Web und Windows durchsuchen</span>
<span id="t27" style="position:absolute;left:981.7px;top:548.63px;font-size:9px;line-height:10.80px;color:#FFF;transform-origin:0 0;transform:scaleX(0.9098);white-space:nowrap;">07:44</span>
<span id="t28" style="position:absolute;left:971px;top:561.63px;font-size:9px;line-height:10.80px;color:#FFF;transform-origin:0 0;transform:scaleX(0.9102);white-space:nowrap;">21.03.2016</span>
<span id="t29" style="position:absolute;left:733px;top:473.95px;font-size:15px;line-height:18.00px;color:rgba(165,172,180,0.58);transform-origin:0 0;transform:scaleX(0.9790);white-space:nowrap;">Windows aktivieren</span>
<span id="t30" style="position:absolute;left:733px;top:494.11px;font-size:11.5px;line-height:13.80px;color:rgba(165,172,180,0.58);transform-origin:0 0;transform:scaleX(0.9379);white-space:nowrap;">Wechseln Sie zu den Einstellungen, um Windows zu</span>
<span id="t31" style="position:absolute;left:733px;top:508.31px;font-size:11.5px;line-height:13.80px;color:rgba(165,172,180,0.58);transform-origin:0 0;transform:scaleX(0.9252);white-space:nowrap;">aktivieren.</span>
</div>
</body></html>
